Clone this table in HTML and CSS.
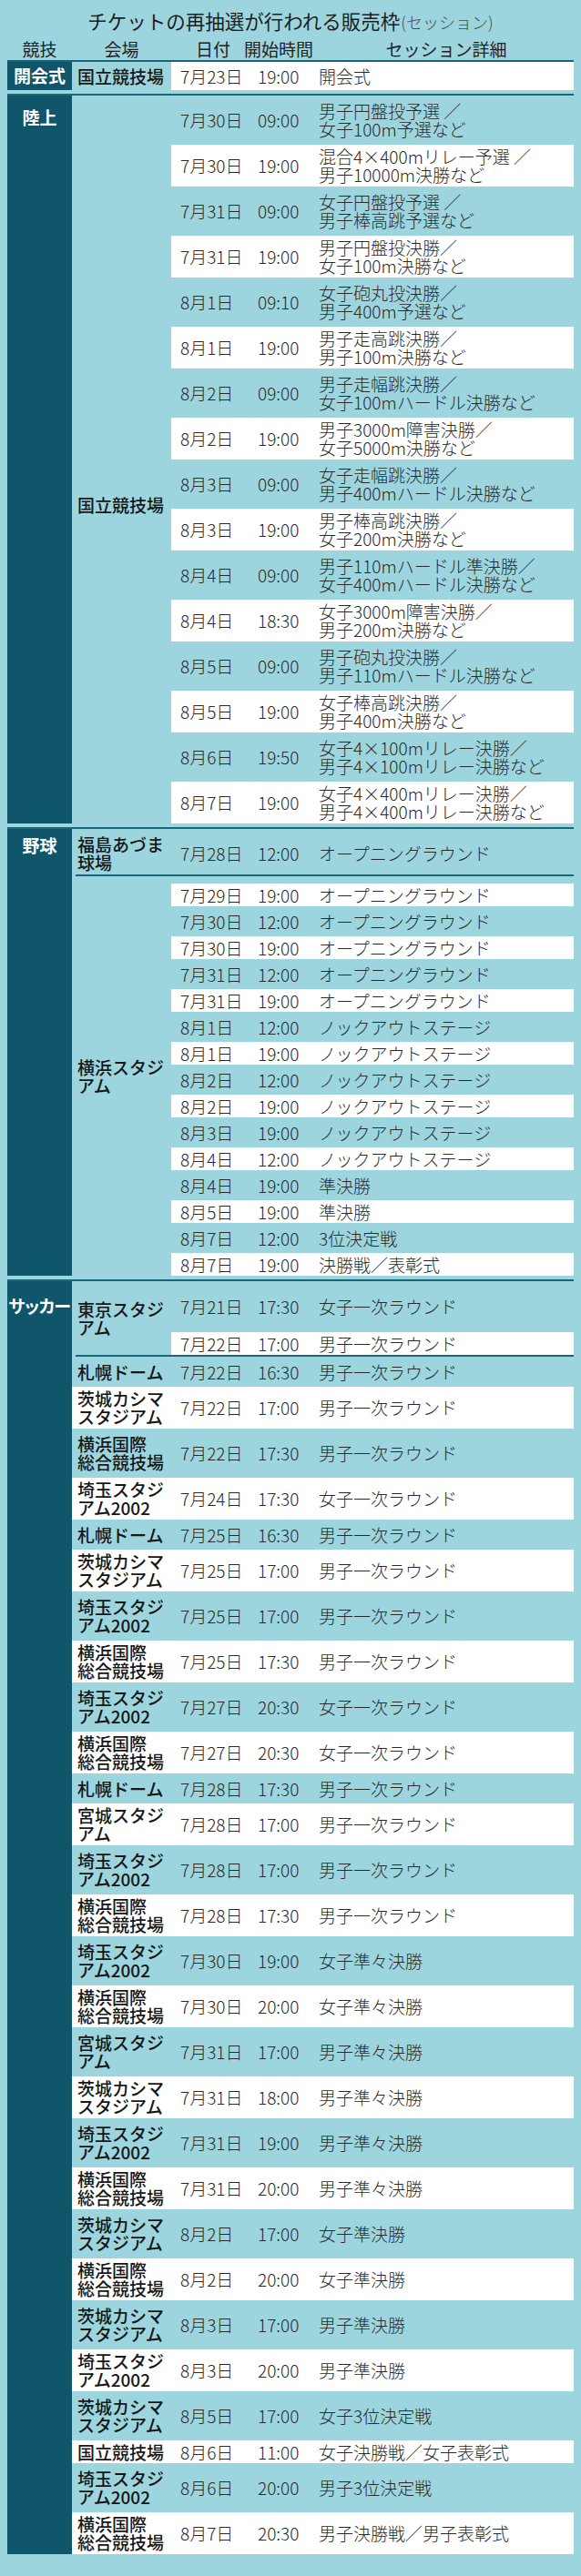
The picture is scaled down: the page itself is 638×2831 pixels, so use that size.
FILE: index.html
```html
<!DOCTYPE html>
<html lang="ja">
<head>
<meta charset="utf-8">
<title>チケットの再抽選が行われる販売枠</title>
<link rel="stylesheet" href="styles.css">
</head>
<body>
<div class="page">
  <h1 class="title">チケットの再抽選が行われる販売枠<span class="title-sub">(セッション)</span></h1>
  <div class="head">
    <span class="h-sport">競技</span>
    <span class="h-venue">会場</span>
    <span class="h-dt"><span>日付</span><span class="h-time">開始時間</span></span>
    <span class="h-detail">セッション詳細</span>
  </div>

  <section class="sport">
    <div class="label label-open">開会式</div>
    <div class="body">
      <div class="group">
        <div class="venue">国立競技場</div>
        <div class="sessions">
          <div class="row alt open-row"><span class="date">7月23日</span><span class="time">19:00</span><span class="detail">開会式</span></div>
        </div>
      </div>
    </div>
  </section>

  <section class="sport">
    <div class="label label-track">陸上</div>
    <div class="body">
      <div class="group group-top">
        <div class="venue venue-track">国立競技場</div>
        <div class="sessions">
          <div class="row tall"><span class="date">7月30日</span><span class="time">09:00</span><span class="detail">男子円盤投予選 ／<br>女子100m予選など</span></div>
          <div class="row tall alt"><span class="date">7月30日</span><span class="time">19:00</span><span class="detail">混合4×400mリレー予選 ／<br>男子10000m決勝など</span></div>
          <div class="row tall"><span class="date">7月31日</span><span class="time">09:00</span><span class="detail">女子円盤投予選 ／<br>男子棒高跳予選など</span></div>
          <div class="row tall alt"><span class="date">7月31日</span><span class="time">19:00</span><span class="detail">男子円盤投決勝／<br>女子100m決勝など</span></div>
          <div class="row tall"><span class="date">8月1日</span><span class="time">09:10</span><span class="detail">女子砲丸投決勝／<br>男子400m予選など</span></div>
          <div class="row tall alt"><span class="date">8月1日</span><span class="time">19:00</span><span class="detail">男子走高跳決勝／<br>男子100m決勝など</span></div>
          <div class="row tall"><span class="date">8月2日</span><span class="time">09:00</span><span class="detail">男子走幅跳決勝／<br>女子100mハードル決勝など</span></div>
          <div class="row tall alt"><span class="date">8月2日</span><span class="time">19:00</span><span class="detail">男子3000m障害決勝／<br>女子5000m決勝など</span></div>
          <div class="row tall"><span class="date">8月3日</span><span class="time">09:00</span><span class="detail">女子走幅跳決勝／<br>男子400mハードル決勝など</span></div>
          <div class="row tall alt"><span class="date">8月3日</span><span class="time">19:00</span><span class="detail">男子棒高跳決勝／<br>女子200m決勝など</span></div>
          <div class="row tall"><span class="date">8月4日</span><span class="time">09:00</span><span class="detail">男子110mハードル準決勝／<br>女子400mハードル決勝など</span></div>
          <div class="row tall alt"><span class="date">8月4日</span><span class="time">18:30</span><span class="detail">女子3000m障害決勝／<br>男子200m決勝など</span></div>
          <div class="row tall"><span class="date">8月5日</span><span class="time">09:00</span><span class="detail">男子砲丸投決勝／<br>男子110mハードル決勝など</span></div>
          <div class="row tall alt"><span class="date">8月5日</span><span class="time">19:00</span><span class="detail">女子棒高跳決勝／<br>男子400m決勝など</span></div>
          <div class="row tall"><span class="date">8月6日</span><span class="time">19:50</span><span class="detail">女子4×100mリレー決勝／<br>男子4×100mリレー決勝など</span></div>
          <div class="row tall alt"><span class="date">8月7日</span><span class="time">19:00</span><span class="detail">女子4×400mリレー決勝／<br>男子4×400mリレー決勝など</span></div>
        </div>
      </div>
    </div>
  </section>

  <section class="sport">
    <div class="label label-ball">野球</div>
    <div class="body">
      <div class="row tall"><span class="venue">福島あづま<br>球場</span><span class="date">7月28日</span><span class="time">12:00</span><span class="detail">オープニングラウンド</span></div>
      <div class="sep"></div>
      <div class="group">
        <div class="venue">横浜スタジ<br>アム</div>
        <div class="sessions">
          <div class="row alt first-gap"><span class="date">7月29日</span><span class="time">19:00</span><span class="detail">オープニングラウンド</span></div>
          <div class="row"><span class="date">7月30日</span><span class="time">12:00</span><span class="detail">オープニングラウンド</span></div>
          <div class="row alt"><span class="date">7月30日</span><span class="time">19:00</span><span class="detail">オープニングラウンド</span></div>
          <div class="row"><span class="date">7月31日</span><span class="time">12:00</span><span class="detail">オープニングラウンド</span></div>
          <div class="row alt"><span class="date">7月31日</span><span class="time">19:00</span><span class="detail">オープニングラウンド</span></div>
          <div class="row"><span class="date">8月1日</span><span class="time">12:00</span><span class="detail">ノックアウトステージ</span></div>
          <div class="row alt"><span class="date">8月1日</span><span class="time">19:00</span><span class="detail">ノックアウトステージ</span></div>
          <div class="row"><span class="date">8月2日</span><span class="time">12:00</span><span class="detail">ノックアウトステージ</span></div>
          <div class="row alt"><span class="date">8月2日</span><span class="time">19:00</span><span class="detail">ノックアウトステージ</span></div>
          <div class="row"><span class="date">8月3日</span><span class="time">19:00</span><span class="detail">ノックアウトステージ</span></div>
          <div class="row alt"><span class="date">8月4日</span><span class="time">12:00</span><span class="detail">ノックアウトステージ</span></div>
          <div class="row"><span class="date">8月4日</span><span class="time">19:00</span><span class="detail">準決勝</span></div>
          <div class="row alt"><span class="date">8月5日</span><span class="time">19:00</span><span class="detail">準決勝</span></div>
          <div class="row"><span class="date">8月7日</span><span class="time">12:00</span><span class="detail">3位決定戦</span></div>
          <div class="row alt"><span class="date">8月7日</span><span class="time">19:00</span><span class="detail">決勝戦／表彰式</span></div>
        </div>
      </div>
    </div>
  </section>

  <section class="sport">
    <div class="label label-soccer">サッカー</div>
    <div class="body">
      <div class="group">
        <div class="venue">東京スタジ<br>アム</div>
        <div class="sessions">
          <div class="row tokyo1"><span class="date">7月21日</span><span class="time">17:30</span><span class="detail">女子一次ラウンド</span></div>
          <div class="row alt tokyo2"><span class="date">7月22日</span><span class="time">17:00</span><span class="detail">男子一次ラウンド</span></div>
        </div>
      </div>
      <div class="sep"></div>
      <div class="row"><span class="venue">札幌ドーム</span><span class="date">7月22日</span><span class="time">16:30</span><span class="detail">男子一次ラウンド</span></div>
      <div class="row tall alt"><span class="venue">茨城カシマ<br>スタジアム</span><span class="date">7月22日</span><span class="time">17:00</span><span class="detail">男子一次ラウンド</span></div>
      <div class="row tall"><span class="venue">横浜国際<br>総合競技場</span><span class="date">7月22日</span><span class="time">17:30</span><span class="detail">男子一次ラウンド</span></div>
      <div class="row tall alt"><span class="venue">埼玉スタジ<br>アム2002</span><span class="date">7月24日</span><span class="time">17:30</span><span class="detail">女子一次ラウンド</span></div>
      <div class="row"><span class="venue">札幌ドーム</span><span class="date">7月25日</span><span class="time">16:30</span><span class="detail">男子一次ラウンド</span></div>
      <div class="row tall alt"><span class="venue">茨城カシマ<br>スタジアム</span><span class="date">7月25日</span><span class="time">17:00</span><span class="detail">男子一次ラウンド</span></div>
      <div class="row tall"><span class="venue">埼玉スタジ<br>アム2002</span><span class="date">7月25日</span><span class="time">17:00</span><span class="detail">男子一次ラウンド</span></div>
      <div class="row tall alt"><span class="venue">横浜国際<br>総合競技場</span><span class="date">7月25日</span><span class="time">17:30</span><span class="detail">男子一次ラウンド</span></div>
      <div class="row tall"><span class="venue">埼玉スタジ<br>アム2002</span><span class="date">7月27日</span><span class="time">20:30</span><span class="detail">女子一次ラウンド</span></div>
      <div class="row tall alt"><span class="venue">横浜国際<br>総合競技場</span><span class="date">7月27日</span><span class="time">20:30</span><span class="detail">女子一次ラウンド</span></div>
      <div class="row"><span class="venue">札幌ドーム</span><span class="date">7月28日</span><span class="time">17:30</span><span class="detail">男子一次ラウンド</span></div>
      <div class="row tall alt"><span class="venue">宮城スタジ<br>アム</span><span class="date">7月28日</span><span class="time">17:00</span><span class="detail">男子一次ラウンド</span></div>
      <div class="row tall"><span class="venue">埼玉スタジ<br>アム2002</span><span class="date">7月28日</span><span class="time">17:00</span><span class="detail">男子一次ラウンド</span></div>
      <div class="row tall alt"><span class="venue">横浜国際<br>総合競技場</span><span class="date">7月28日</span><span class="time">17:30</span><span class="detail">男子一次ラウンド</span></div>
      <div class="row tall"><span class="venue">埼玉スタジ<br>アム2002</span><span class="date">7月30日</span><span class="time">19:00</span><span class="detail">女子準々決勝</span></div>
      <div class="row tall alt"><span class="venue">横浜国際<br>総合競技場</span><span class="date">7月30日</span><span class="time">20:00</span><span class="detail">女子準々決勝</span></div>
      <div class="row tall"><span class="venue">宮城スタジ<br>アム</span><span class="date">7月31日</span><span class="time">17:00</span><span class="detail">男子準々決勝</span></div>
      <div class="row tall alt"><span class="venue">茨城カシマ<br>スタジアム</span><span class="date">7月31日</span><span class="time">18:00</span><span class="detail">男子準々決勝</span></div>
      <div class="row tall"><span class="venue">埼玉スタジ<br>アム2002</span><span class="date">7月31日</span><span class="time">19:00</span><span class="detail">男子準々決勝</span></div>
      <div class="row tall alt"><span class="venue">横浜国際<br>総合競技場</span><span class="date">7月31日</span><span class="time">20:00</span><span class="detail">男子準々決勝</span></div>
      <div class="row tall"><span class="venue">茨城カシマ<br>スタジアム</span><span class="date">8月2日</span><span class="time">17:00</span><span class="detail">女子準決勝</span></div>
      <div class="row tall alt"><span class="venue">横浜国際<br>総合競技場</span><span class="date">8月2日</span><span class="time">20:00</span><span class="detail">女子準決勝</span></div>
      <div class="row tall"><span class="venue">茨城カシマ<br>スタジアム</span><span class="date">8月3日</span><span class="time">17:00</span><span class="detail">男子準決勝</span></div>
      <div class="row tall alt"><span class="venue">埼玉スタジ<br>アム2002</span><span class="date">8月3日</span><span class="time">20:00</span><span class="detail">男子準決勝</span></div>
      <div class="row tall"><span class="venue">茨城カシマ<br>スタジアム</span><span class="date">8月5日</span><span class="time">17:00</span><span class="detail">女子3位決定戦</span></div>
      <div class="row alt"><span class="venue">国立競技場</span><span class="date">8月6日</span><span class="time">11:00</span><span class="detail">女子決勝戦／女子表彰式</span></div>
      <div class="row tall"><span class="venue">埼玉スタジ<br>アム2002</span><span class="date">8月6日</span><span class="time">20:00</span><span class="detail">男子3位決定戦</span></div>
      <div class="row tall alt"><span class="venue">横浜国際<br>総合競技場</span><span class="date">8月7日</span><span class="time">20:30</span><span class="detail">男子決勝戦／男子表彰式</span></div>
    </div>
  </section>
</div>
</body>
</html>
```

FILE: styles.css
```css
* { box-sizing: border-box; }

html, body {
  margin: 0;
  background: #9dd5df;
}

body {
  font-family: "Noto Sans CJK JP", "Noto Sans", sans-serif;
  color: #222;
}

.page {
  width: 638px;
  padding: 10px 8px 21px;
}

.title {
  margin: 0;
  font-size: 21.5px;
  line-height: 26px;
  font-weight: 400;
  text-align: center;
  color: #1d1d1d;
}

.title-sub {
  font-size: 18px;
  font-weight: 300;
  color: #4a4a4a;
  margin-left: 1px;
}

.head {
  display: flex;
  padding-top: 4px;
  height: 29px;
  font-size: 19px;
  line-height: 25px;
  color: #222;
}

.h-sport { width: 71px; text-align: center; }
.h-venue { width: 109px; text-align: center; }
.h-dt { width: 162px; padding-left: 27px; display: flex; }
.h-time { margin-left: 15px; }
.h-detail { flex: 1; text-align: center; }

.sport {
  display: flex;
  border-top: 2px solid #17667a;
  margin-bottom: 4px;
}

.label {
  width: 71px;
  flex-shrink: 0;
  background: #0f566a;
  color: #fff;
  font-weight: 700;
  font-size: 19px;
  line-height: 20px;
  text-align: center;
}

.label-open { padding-top: 5px; }
.label-track { padding-top: 14px; }
.label-ball { padding-top: 8px; }
.label-soccer { padding-top: 17px; font-feature-settings: "palt"; letter-spacing: -0.5px; }

.body { flex: 1; }

.group {
  display: flex;
  align-items: center;
}

.group-top { align-items: flex-start; }

.venue {
  width: 109px;
  flex-shrink: 0;
  padding-left: 6px;
  font-size: 19px;
  line-height: 20px;
  font-weight: 500;
  color: #161616;
  white-space: nowrap;
}

.venue-track { margin-top: 440px; }

.sessions { flex: 1; }

.row {
  display: flex;
  align-items: center;
  height: 25px;
  margin-top: 4px;
  font-size: 19px;
  line-height: 20px;
  font-weight: 300;
  color: #2a2a2a;
}

.row.tall { height: 46px; }
.alt { background: #fff; }

.open-row { height: 31px; margin-top: 0; }
.first-gap { margin-top: 8px; }
.tokyo1 { height: 56px; margin-top: 0; }
.tokyo2 { height: 25px; margin-top: 0; }

.date {
  width: 95px;
  flex-shrink: 0;
  padding-left: 10px;
  white-space: nowrap;
}

.time {
  width: 67px;
  flex-shrink: 0;
  white-space: nowrap;
}

.detail {
  flex: 1;
  white-space: nowrap;
}

.sep {
  height: 2px;
  margin-left: 4px;
  background: #17667a;
}
```
